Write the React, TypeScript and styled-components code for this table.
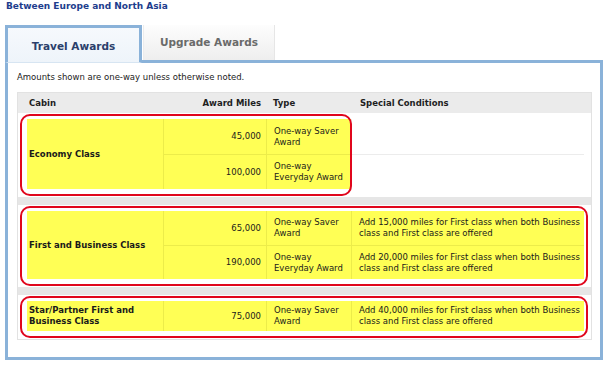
import React from "react";
import styled, { createGlobalStyle } from "styled-components";

const GlobalStyle = createGlobalStyle`
  body {
    margin: 0;
    background: #ffffff;
    font-family: Verdana, "DejaVu Sans", sans-serif;
    color: #222;
  }
`;

const Page = styled.div`
  width: 610px;
  height: 367px;
  box-sizing: border-box;
  padding: 0 7px 0 5px;
  overflow: hidden;
`;

const Heading = styled.h3`
  margin: 0;
  padding: 1px 0 0 1px;
  font-size: 9px;
  line-height: 11px;
  font-weight: bold;
  color: #1d3d8d;
`;

const TabBar = styled.div`
  display: flex;
  align-items: flex-end;
  gap: 1px;
  margin-top: 13px;
  position: relative;
  z-index: 1;
`;

const Tab = styled.div<{ $active?: boolean }>`
  box-sizing: border-box;
  display: flex;
  align-items: center;
  justify-content: center;
  font-size: 10.5px;
  font-weight: bold;

  ${(p) =>
    p.$active
      ? `
    width: 137px;
    height: 38px;
    margin-bottom: -3px;
    padding-top: 2px;
    border: 3px solid #8ab2d9;
    border-bottom: 1px solid #d7e5f2;
    background: linear-gradient(#f6f9fd, #eef4fa);
    color: #2b3f6b;
  `
      : `
    width: 132px;
    height: 35px;
    padding-bottom: 1px;
    background: linear-gradient(#fdfdfd, #eeeeee);
    box-shadow: inset 1px 0 0 #ececec, inset -1px 0 0 #e6e6e6;
    color: #6a6a6a;
  `}
`;

const Panel = styled.div`
  box-sizing: border-box;
  height: 300px;
  border: 3px solid #8ab2d9;
  padding: 9px 8px 17px 9px;
  background: #ffffff;
`;

const Note = styled.p`
  margin: 0 0 9px;
  font-size: 8.5px;
  line-height: 11px;
  color: #222;
`;

const Table = styled.div`
  border: 1px solid #e2e2e2;
  background: #ffffff;
  font-size: 8.5px;
  line-height: 11px;
`;

const HeaderRow = styled.div`
  display: grid;
  grid-template-columns: 145px 103px 85px 1fr;
  height: 20px;
  background: #ebebeb;
  align-items: center;
  font-weight: bold;
  color: #1e1e1e;
`;

const HeadCell = styled.div<{ $right?: boolean; $pad: number }>`
  text-align: ${(p) => (p.$right ? "right" : "left")};
  padding: ${(p) => (p.$right ? `0 ${p.$pad}px 0 0` : `0 0 0 ${p.$pad}px`)};
`;

const Group = styled.div<{ $rowH: number; $ringRight: number }>`
  position: relative;
  display: grid;
  grid-template-columns: 136px 103px 85px 1fr;
  grid-auto-rows: ${(p) => p.$rowH}px;
  padding: 6px 7px 8px 9px;

  &::after {
    content: "";
    position: absolute;
    top: 1px;
    bottom: 1px;
    left: 2px;
    right: ${(p) => p.$ringRight}px;
    border: 2.5px solid #e0061c;
    border-radius: 10px;
    pointer-events: none;
  }
`;

const Cell = styled.div<{
  $hl?: boolean;
  $right?: boolean;
  $bold?: boolean;
  $span?: number;
  $divider?: boolean;
  $rule?: boolean;
}>`
  display: flex;
  align-items: center;
  justify-content: ${(p) => (p.$right ? "flex-end" : "flex-start")};
  box-sizing: border-box;
  background: ${(p) => (p.$hl ? "#ffff55" : "#ffffff")};
  font-weight: ${(p) => (p.$bold ? "bold" : "normal")};
  color: #1a1a1a;
  grid-row: ${(p) => (p.$span ? `span ${p.$span}` : "auto")};
  padding: ${(p) => (p.$right ? "0 5px 0 0" : p.$bold ? "0 4px 0 2px" : "0 1px 0 7px")};
  border-left: ${(p) =>
    p.$divider ? `1px solid ${p.$hl ? "#ecec4a" : "#ececec"}` : "none"};
  border-top: ${(p) =>
    p.$rule ? `1px solid ${p.$hl ? "#ecec4a" : "#ececec"}` : "none"};
`;

const Separator = styled.div`
  height: 8px;
  background: #e6e6e6;
`;

type AwardRow = { miles: string; type: string; condition?: string };

type AwardGroup = {
  cabin: string;
  rows: AwardRow[];
  rowH: number;
  wide: boolean;
};

const groups: AwardGroup[] = [
  {
    cabin: "Economy Class",
    rowH: 35,
    wide: false,
    rows: [
      { miles: "45,000", type: "One-way Saver Award" },
      { miles: "100,000", type: "One-way Everyday Award" },
    ],
  },
  {
    cabin: "First and Business Class",
    rowH: 34,
    wide: true,
    rows: [
      {
        miles: "65,000",
        type: "One-way Saver Award",
        condition: "Add 15,000 miles for First class when both Business class and First class are offered",
      },
      {
        miles: "190,000",
        type: "One-way Everyday Award",
        condition: "Add 20,000 miles for First class when both Business class and First class are offered",
      },
    ],
  },
  {
    cabin: "Star/Partner First and Business Class",
    rowH: 30,
    wide: true,
    rows: [
      {
        miles: "75,000",
        type: "One-way Saver Award",
        condition: "Add 40,000 miles for First class when both Business class and First class are offered",
      },
    ],
  },
];

const App = () => {
  return (
    <Page>
      <GlobalStyle />
      <Heading>Between Europe and North Asia</Heading>
      <TabBar>
        <Tab $active>Travel Awards</Tab>
        <Tab>Upgrade Awards</Tab>
      </TabBar>
      <Panel>
        <Note>Amounts shown are one-way unless otherwise noted.</Note>
        <Table>
          <HeaderRow>
            <HeadCell $pad={11}>Cabin</HeadCell>
            <HeadCell $right $pad={5}>
              Award Miles
            </HeadCell>
            <HeadCell $pad={7}>Type</HeadCell>
            <HeadCell $pad={9}>Special Conditions</HeadCell>
          </HeaderRow>
          {groups.map((group, gi) => (
            <React.Fragment key={group.cabin}>
              {gi > 0 && <Separator />}
              <Group $rowH={group.rowH} $ringRight={group.wide ? 3 : 239}>
                <Cell $hl $bold $span={group.rows.length}>
                  {group.cabin}
                </Cell>
                {group.rows.map((row, ri) => (
                  <React.Fragment key={row.miles}>
                    <Cell $hl $right $divider $rule={ri > 0}>
                      {row.miles}
                    </Cell>
                    <Cell $hl $divider $rule={ri > 0}>
                      {row.type}
                    </Cell>
                    <Cell $hl={group.wide} $divider $rule={ri > 0}>
                      {row.condition}
                    </Cell>
                  </React.Fragment>
                ))}
              </Group>
            </React.Fragment>
          ))}
        </Table>
      </Panel>
    </Page>
  );
};

export default App;
